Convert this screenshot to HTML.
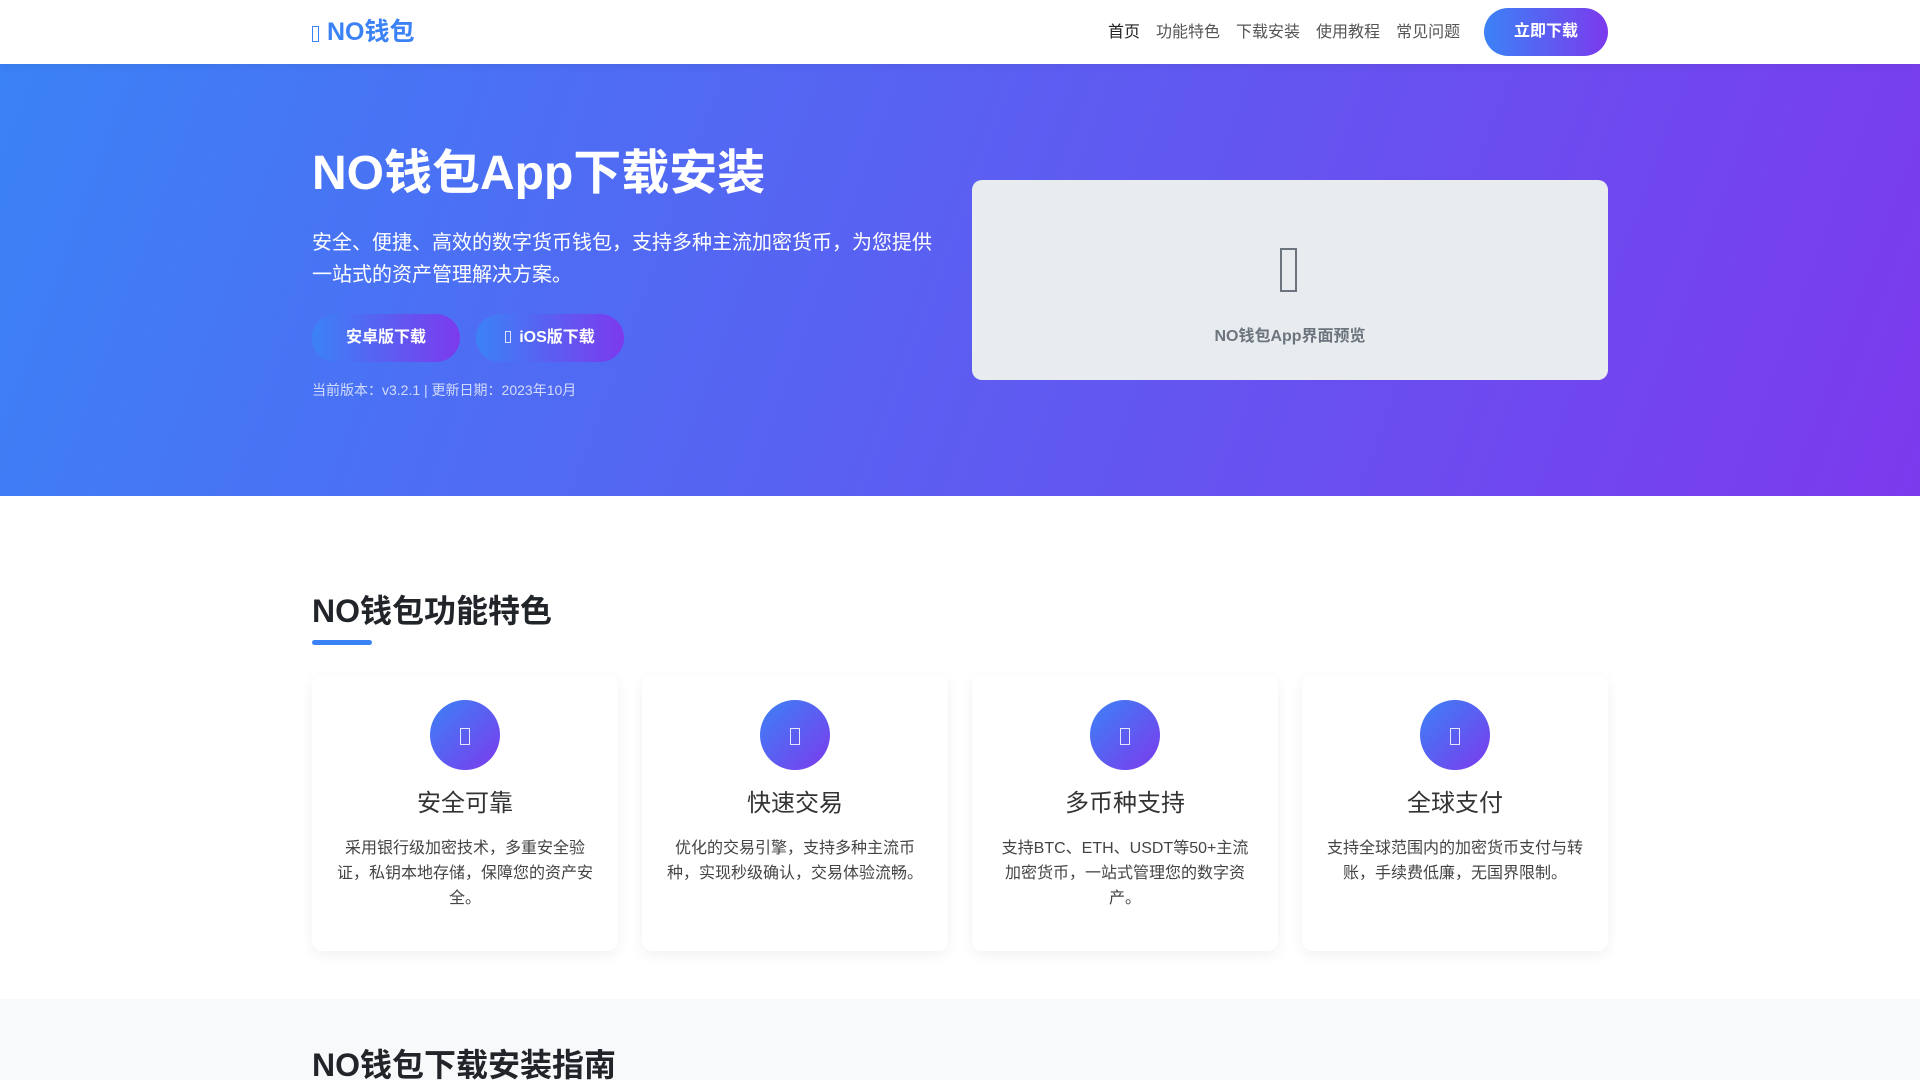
<!DOCTYPE html>
<html><head><meta charset="utf-8">
<style>
*{margin:0;padding:0;box-sizing:border-box}
body{width:1920px;height:1080px;overflow:hidden;font-family:"Liberation Sans","Noto Sans CJK SC",sans-serif;background:#fff;color:#212529}
nav{position:absolute;top:0;left:0;width:1920px;height:64px;background:#fff;box-shadow:0 2px 8px rgba(0,0,0,.06);z-index:2}
.logo{position:absolute;left:312px;top:12px;font-size:25px;font-weight:bold;color:#3b82f6}
.logo i{font-style:normal;display:inline-block;width:7px;height:16px;border:1px solid #3b82f6;vertical-align:-2px;margin-right:8px}
.links{position:absolute;left:1108px;top:18px;font-size:16px;color:#555}
.links span{margin-right:16px}
.btn{position:absolute;left:1484px;top:8px;width:124px;height:48px;border-radius:24px;background:linear-gradient(90deg,#3b82f6,#7c3aed);color:#fff;font-weight:bold;font-size:16px;text-align:center;line-height:48px}
.hero{position:absolute;top:64px;left:0;width:1920px;height:432px;background:linear-gradient(110deg,#3b82f6,#7c3aed)}
h1{position:absolute;left:312px;top:133px;font-size:48px;color:#fff;font-weight:bold}
.hp{position:absolute;left:312px;top:227px;width:630px;font-size:20px;line-height:32px;color:#fff}
.hb{position:absolute;top:314px;width:148px;height:48px;border-radius:24px;background:linear-gradient(90deg,#3b82f6,#7c3aed);color:#fff;font-weight:bold;font-size:16px;text-align:center;line-height:48px}
.tofu{display:inline-block;border:1px solid currentColor;opacity:.8}
.ver{position:absolute;left:312px;top:380px;font-size:14px;color:rgba(255,255,255,.75)}
.prev{position:absolute;left:972px;top:180px;width:636px;height:200px;background:#e9ecef;border-radius:10px;text-align:center;color:#6c757d}
h2{position:absolute;left:312px;font-size:32px;font-weight:bold;color:#212529}
.ul{position:absolute;left:312px;top:640px;width:60px;height:5px;border-radius:3px;background:#3b82f6}
.card{position:absolute;top:675px;width:306px;height:276px;background:#fff;border-radius:10px;box-shadow:0 4px 14px rgba(0,0,0,.06);text-align:center}
.ci{position:absolute;left:118px;top:25px;width:70px;height:70px;border-radius:50%;background:linear-gradient(135deg,#3b82f6,#7c3aed)}
.ci i{position:absolute;left:30px;top:28px;width:10px;height:17px;border:1px solid rgba(255,255,255,.85)}
.card h3{position:absolute;top:108px;left:0;width:100%;font-size:24px;font-weight:normal;color:#333}
.card p{position:absolute;top:161px;left:24px;right:24px;font-size:16px;line-height:25px;color:#444}
.s2{position:absolute;top:999px;left:0;width:1920px;height:81px;background:#f8f9fa}
</style></head><body>
<nav>
<div class="logo"><i></i>NO钱包</div>
<div class="links"><span style="color:#222">首页</span><span>功能特色</span><span>下载安装</span><span>使用教程</span><span>常见问题</span></div>
<div class="btn">立即下载</div>
</nav>
<div class="hero"></div>
<h1>NO钱包App下载安装</h1>
<div class="hp">安全、便捷、高效的数字货币钱包，支持多种主流加密货币，为您提供一站式的资产管理解决方案。</div>
<div class="hb" style="left:312px">安卓版下载</div>
<div class="hb" style="left:476px"><span class="tofu" style="width:6px;height:12px;margin-right:8px;vertical-align:-1px"></span>iOS版下载</div>
<div class="ver">当前版本：v3.2.1 | 更新日期：2023年10月</div>
<div class="prev">
<div style="position:absolute;left:308px;top:68px;width:17px;height:44px;border:2px solid #6c757d"></div>
<div style="position:absolute;top:142px;width:100%;font-size:16px;font-weight:bold">NO钱包App界面预览</div>
</div>
<h2 style="top:586px">NO钱包功能特色</h2>
<div class="ul"></div>
<div class="card" style="left:312px"><div class="ci"><i></i></div><h3>安全可靠</h3><p>采用银行级加密技术，多重安全验证，私钥本地存储，保障您的资产安全。</p></div>
<div class="card" style="left:642px"><div class="ci"><i></i></div><h3>快速交易</h3><p>优化的交易引擎，支持多种主流币种，实现秒级确认，交易体验流畅。</p></div>
<div class="card" style="left:972px"><div class="ci"><i></i></div><h3>多币种支持</h3><p>支持BTC、ETH、USDT等50+主流加密货币，一站式管理您的数字资产。</p></div>
<div class="card" style="left:1302px"><div class="ci"><i></i></div><h3>全球支付</h3><p>支持全球范围内的加密货币支付与转账，手续费低廉，无国界限制。</p></div>
<div class="s2"></div>
<h2 style="top:1040px">NO钱包下载安装指南</h2>
</body></html>
